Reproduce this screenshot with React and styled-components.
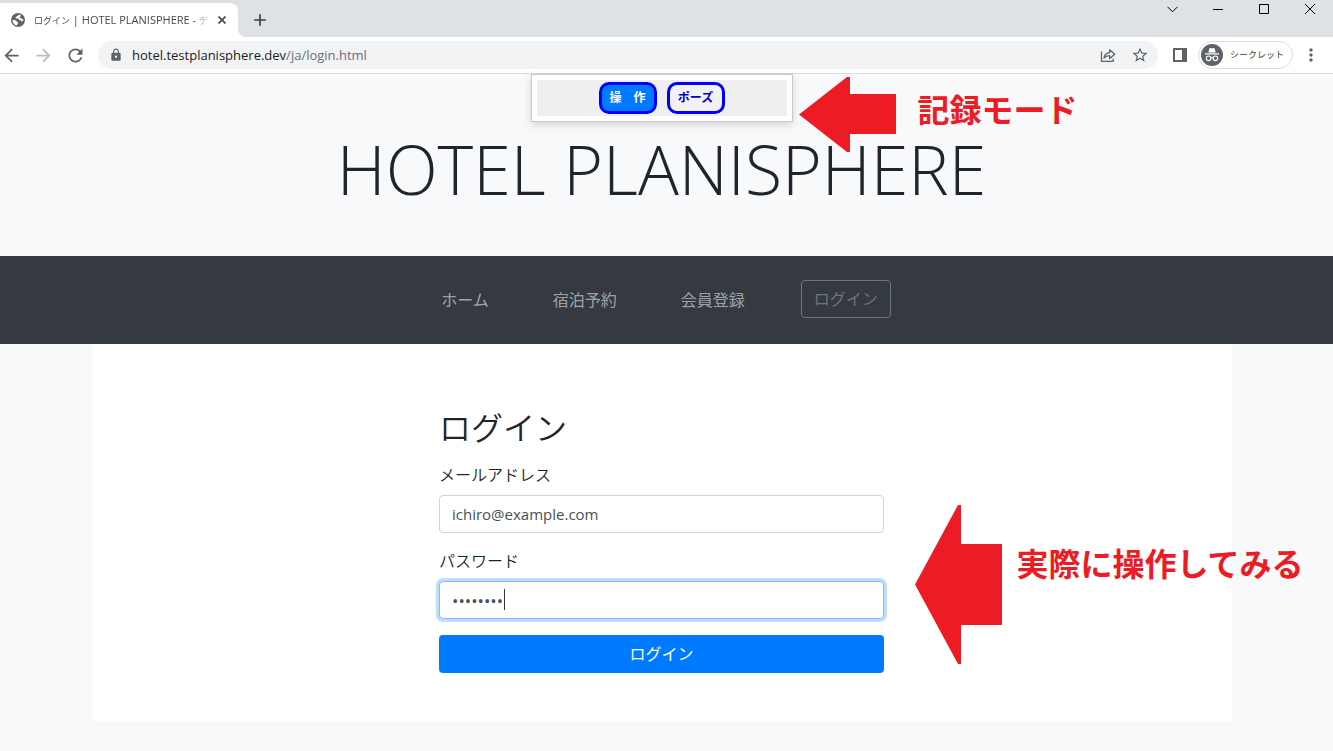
import React, { useState } from 'react'
import styled, { createGlobalStyle, css } from 'styled-components'
import {
  MdAdd,
  MdArrowBack,
  MdArrowForward,
  MdLock,
  MdMoreVert,
  MdRefresh,
  MdStarBorder,
} from 'react-icons/md'

const GlobalStyle = createGlobalStyle`
  *, *::before, *::after {
    box-sizing: border-box;
  }
  body {
    margin: 0;
    background: #f8f9fa;
    color: #212529;
    font: 16px/24px 'Open Sans', 'Noto Sans CJK JP', sans-serif;
    overflow: hidden;
  }
  button, input {
    font: inherit;
    margin: 0;
  }
`

/* browser window */

const TabStrip = styled.div`
  display: flex;
  align-items: flex-end;
  height: 37px;
  background: #dee1e6;
`

const Tab = styled.div`
  display: flex;
  align-items: center;
  width: 238px;
  height: 34px;
  padding: 0 8px 0 11px;
  border-radius: 0 8px 0 0;
  background: #fff;
  color: #5f6368;
`

const TabTitle = styled.span`
  flex: 1;
  min-width: 0;
  margin: 0 4px 0 9px;
  overflow: hidden;
  white-space: nowrap;
  color: #45494d;
  font-size: 11px;
  line-height: 20px;
  mask-image: linear-gradient(to left, transparent, #000 16px);

  small {
    font-size: 9px;
  }
`

const IconButton = styled.button`
  display: flex;
  flex: none;
  align-items: center;
  justify-content: center;
  width: ${props => props.$width || 32}px;
  height: 28px;
  padding: 0;
  border: 0;
  background: none;
  color: ${props => props.$color || '#5f6368'};
`

const TabFoot = styled.svg`
  display: block;
  width: 8px;
  height: 8px;
`

const NewTabSlot = styled.div`
  display: flex;
  align-items: center;
  height: 34px;
`

const WindowButtons = styled.div`
  display: flex;
  align-self: flex-start;
  height: 18px;
  margin-left: auto;
  align-items: center;
`

const Toolbar = styled.div`
  display: flex;
  align-items: center;
  height: 37px;
  padding-right: 4px;
  border-bottom: 1px solid #dadce0;
  background: #fff;
`

const NavButtons = styled.div`
  display: flex;
  width: 98px;
  margin-left: -5px;
  margin-right: 5px;
`

const Omnibox = styled.div`
  display: flex;
  flex: 1;
  align-items: center;
  height: 28px;
  margin-right: 4px;
  padding: 0 2px 0 11px;
  border-radius: 14px;
  background: #f1f3f4;
  color: #5f6368;
`

const Url = styled.span`
  flex: 1;
  margin-left: 9px;
  color: #6b6f74;
  font-size: 13px;
  line-height: 20px;

  b {
    color: #202124;
    font-weight: 400;
  }
`

const Profile = styled.button`
  display: flex;
  align-items: center;
  width: 95px;
  height: 28px;
  padding: 0 0 0 2px;
  gap: 7px;
  border: 1px solid #dadce0;
  border-radius: 14px;
  background: #fff;
  color: #3c4043;
  font-size: 9px;
  line-height: 16px;
  white-space: nowrap;

  svg {
    flex: none;
  }
`

/* page */

const Page = styled.div`
  position: relative;
  padding-right: 10px;
`

const Jumbotron = styled.header`
  padding: 52px 0 44px;
  text-align: center;
`

const SiteTitle = styled.h1`
  margin: 0;
  font-size: 68px;
  font-weight: 300;
  line-height: 86px;
`

const SiteNav = styled.nav`
  display: flex;
  align-items: flex-start;
  justify-content: center;
  gap: 48px;
  margin-right: -10px;
  padding: 24px 9px 24px 0;
  background: #343a40;
`

const NavLink = styled.a`
  padding: 8px;
  color: rgba(255, 255, 255, 0.55);
  text-decoration: none;
`

const buttonBase = css`
  height: 38px;
  padding: 0 12px;
  border-radius: 4px;
  line-height: 24px;
`

const LoginNavButton = styled.button`
  ${buttonBase}
  border: 1px solid #6c757d;
  background: none;
  color: #6c757d;
`

const Container = styled.main`
  max-width: 1140px;
  margin: 0 auto;
  padding: 64px 15px 48px;
  background: #fff;
`

const LoginForm = styled.form`
  max-width: 445px;
  margin: 0 auto;
`

const FormTitle = styled.h2`
  margin: 0 0 16px;
  font-size: 32px;
  font-weight: 350;
  line-height: 39px;
`

const FormGroup = styled.div`
  position: relative;
  margin-bottom: 16px;
`

const Label = styled.label`
  display: block;
  margin-bottom: 8px;
  font-weight: 350;
`

const Input = styled.input`
  display: block;
  width: 100%;
  height: 38px;
  padding: 6px 12px;
  border: 1px solid ${props => (props.$active ? '#80bdff' : '#ced4da')};
  border-radius: 4px;
  outline: 0;
  background: #fff;
  box-shadow: ${props => (props.$active ? '0 0 0 3px #bfdeff' : 'none')};
  color: #495057;
  font-size: ${props => (props.type === 'password' ? 17 : 15)}px;
  caret-color: transparent;
`

const Caret = styled.span`
  position: absolute;
  bottom: 9px;
  left: 65px;
  width: 1px;
  height: 21px;
  background: #343a40;
`

const SubmitButton = styled.button`
  ${buttonBase}
  display: block;
  width: 100%;
  border: 0;
  background: #007bff;
  color: #fff;
`

/* recorder panel and notes lying over the page */

const Recorder = styled.div`
  position: absolute;
  top: 0;
  left: calc(50% - 136px);
  width: 262px;
  padding: 5px;
  border: 1px solid #c8c8c8;
  background: #fff;
  box-shadow: 0 3px 8px rgba(0, 0, 0, 0.15);
`

const RecorderBar = styled.div`
  display: flex;
  justify-content: center;
  gap: 10px;
  padding: 2px 0;
  background: #efefef;
`

const RecorderButton = styled.button`
  width: 58px;
  height: 32px;
  padding: 0;
  border: 3px solid #00f;
  border-radius: 10px;
  background: ${props => (props.$on ? '#007bff' : '#f2f2f4')};
  color: ${props => (props.$on ? '#fff' : '#00c')};
  font-size: 12px;
  font-weight: 700;
  line-height: 16px;
`

const Note = styled.div`
  position: absolute;
  top: ${props => props.$top}px;
  left: calc(50% + ${props => props.$left}px);
  display: flex;
  gap: ${props => props.$gap}px;
  color: #ed1c24;
  font-size: 32px;
  font-weight: 700;
  line-height: 36px;
  white-space: nowrap;

  svg {
    display: block;
    flex: none;
  }
`

const NoteText = styled.span`
  margin-top: ${props => props.$drop}px;
`

const strokeProps = { fill: 'none', stroke: 'currentColor' }

function GlobeIcon() {
  return (
    <svg width="14" height="14" viewBox="0 0 14 14">
      <circle cx="7" cy="7" r="7" fill="currentColor" />
      <path fill="#fff" d="M7.8 1.600c-.2 1-.9 1.300-2 1.500-.2.900-.7 1.300-1.500 1.500.3.900 1 1 2.200 1 1.100.1 1.700.7 1.800 1.700 1.400 0 2.300.3 2.500 1.300 1.200-.4 1.700-1.100 1.700-2.200-1 .1-1.600-.3-1.900-1.200-1 .1-1.700-.2-2-1 .7-.6 1.200-1.200 1.200-2.200z" />
      <path fill="#fff" d="M1.500 7.200c1.700-.4 4 0 4.300 1.500.8.100 1.500.6 1.500 1.500-.9.300-1.200 1-1.200 2.300C3.300 12 1.500 9.900 1.500 7.200z" />
    </svg>
  )
}

function ShareIcon() {
  return (
    <svg width="16" height="16" viewBox="0 0 16 16" {...strokeProps} strokeWidth="1.3">
      <path d="M1.5 4.500v9.800h11.600v-2.600" />
      <path d="M4 11.200c.5-3.600 2.600-5.400 5.700-5.600V2.800l5 4.400-5 4.300V8.700c-2.500 0-4.300.8-5.700 2.500z" strokeLinejoin="round" />
    </svg>
  )
}

function SidePanelIcon() {
  return (
    <svg width="14" height="14" viewBox="0 0 14 14">
      <path fill="currentColor" fillRule="evenodd" d="M0 0h14v14H0zM2 2v10h7V2z" />
    </svg>
  )
}

function IncognitoIcon() {
  return (
    <svg width="22" height="22" viewBox="0 0 22 22">
      <circle cx="11" cy="11" r="11" fill="#5f6368" />
      <path fill="#fff" d="M7.300 8.400 8.400 4.600c.1-.5.5-.7 1-.5l1.600.4 1.600-.4c.5-.2.9 0 1 .5l1.100 3.800zM4 9.300h14v1.200H4z" />
      <g fill="none" stroke="#fff" strokeWidth="1.100">
        <circle cx="7.600" cy="14.300" r="2.300" />
        <circle cx="14.400" cy="14.300" r="2.300" />
        <path d="M9.900 14c.7-.5 1.500-.5 2.200 0" />
      </g>
    </svg>
  )
}

function Browser() {
  return (
    <div>
      <TabStrip>
        <Tab>
          <GlobeIcon />
          <TabTitle>
            <small>ログイン</small> | HOTEL PLANISPHERE - <small>デ</small>
          </TabTitle>
          <IconButton $width={16} $color="#45494d" aria-label="タブを閉じる">
            <svg width="8" height="8" viewBox="0 0 8 8" {...strokeProps} strokeWidth="1.7">
              <path d="M.5.5l7 7M7.500.5l-7 7" />
            </svg>
          </IconButton>
        </Tab>
        <TabFoot viewBox="0 0 8 8">
          <path fill="#fff" d="M0 0v8h8A8 8 0 0 1 0 0z" />
        </TabFoot>
        <NewTabSlot>
          <IconButton $width={28} $color="#3c4043" aria-label="新しいタブ">
            <MdAdd size={20} />
          </IconButton>
        </NewTabSlot>
        <WindowButtons>
          <IconButton $width={46} $color="#000" aria-label="タブを検索">
            <svg width="11" height="7" viewBox="0 0 11 7" {...strokeProps}>
              <path d="M.5.8l5 5 5-5" />
            </svg>
          </IconButton>
          <IconButton $width={46} $color="#000" aria-label="最小化">
            <svg width="10" height="1" viewBox="0 0 10 1">
              <path fill="currentColor" d="M0 0h10v1H0z" />
            </svg>
          </IconButton>
          <IconButton $width={46} $color="#000" aria-label="最大化">
            <svg width="10" height="10" viewBox="0 0 10 10" {...strokeProps}>
              <path d="M.5.5h9v9h-9z" />
            </svg>
          </IconButton>
          <IconButton $width={46} $color="#000" aria-label="閉じる">
            <svg width="10" height="10" viewBox="0 0 10 10" {...strokeProps}>
              <path d="M0 0l10 10M10 0L0 10" />
            </svg>
          </IconButton>
        </WindowButtons>
      </TabStrip>
      <Toolbar>
        <NavButtons>
          <IconButton aria-label="戻る">
            <MdArrowBack size={21} />
          </IconButton>
          <IconButton $color="#babcbe" aria-label="進む">
            <MdArrowForward size={21} />
          </IconButton>
          <IconButton aria-label="再読み込み">
            <MdRefresh size={21} />
          </IconButton>
        </NavButtons>
        <Omnibox>
          <MdLock size={14} />
          <Url>
            <b>hotel.testplanisphere.dev</b>/ja/login.html
          </Url>
          <IconButton aria-label="共有">
            <ShareIcon />
          </IconButton>
          <IconButton aria-label="ブックマーク">
            <MdStarBorder size={18} />
          </IconButton>
        </Omnibox>
        <IconButton $width={36} aria-label="サイドパネル">
          <SidePanelIcon />
        </IconButton>
        <Profile>
          <IncognitoIcon />
          シークレット
        </Profile>
        <IconButton $width={36} aria-label="メニュー">
          <MdMoreVert size={20} />
        </IconButton>
      </Toolbar>
    </div>
  )
}

function Login() {
  const [email, setEmail] = useState('ichiro@example.com')
  const [password, setPassword] = useState('password')

  return (
    <LoginForm onSubmit={event => event.preventDefault()}>
      <FormTitle>ログイン</FormTitle>
      <FormGroup>
        <Label htmlFor="email">メールアドレス</Label>
        <Input
          id="email"
          type="email"
          value={email}
          onChange={event => setEmail(event.target.value)}
        />
      </FormGroup>
      <FormGroup>
        <Label htmlFor="password">パスワード</Label>
        <Input
          id="password"
          type="password"
          $active
          value={password}
          onChange={event => setPassword(event.target.value)}
        />
        <Caret />
      </FormGroup>
      <SubmitButton type="submit">ログイン</SubmitButton>
    </LoginForm>
  )
}

export default function App() {
  return (
    <>
      <GlobalStyle />
      <Browser />
      <Page>
        <Jumbotron>
          <SiteTitle>HOTEL PLANISPHERE</SiteTitle>
        </Jumbotron>
        <SiteNav>
          <NavLink href="#home">ホーム</NavLink>
          <NavLink href="#plans">宿泊予約</NavLink>
          <NavLink href="#signup">会員登録</NavLink>
          <LoginNavButton type="button">ログイン</LoginNavButton>
        </SiteNav>
        <Container>
          <Login />
        </Container>
        <Recorder>
          <RecorderBar>
            <RecorderButton $on>操　作</RecorderButton>
            <RecorderButton>ポーズ</RecorderButton>
          </RecorderBar>
        </Recorder>
        <Note $top={3} $left={132} $gap={22}>
          <svg width="97" height="75" viewBox="0 0 97 75">
            <path fill="currentColor" d="M0 37.500 48 0h3v17h46v40H51v18h-3z" />
          </svg>
          <NoteText $drop={15}>記録モード</NoteText>
        </Note>
        <Note $top={431} $left={248} $gap={15}>
          <svg width="87" height="159" viewBox="0 0 87 159">
            <path fill="currentColor" d="M0 79.500 43 0h3v39h41v81H46v39h-3z" />
          </svg>
          <NoteText $drop={41}>実際に操作してみる</NoteText>
        </Note>
      </Page>
    </>
  )
}
